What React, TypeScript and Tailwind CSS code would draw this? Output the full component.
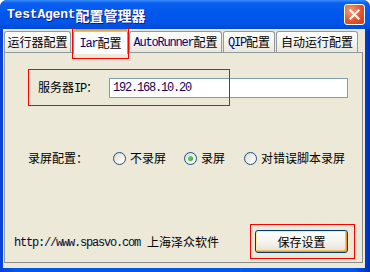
import React from "react";

const cjk = "font-['Noto_Sans_CJK_SC',sans-serif]";

function L({ children }: { children: React.ReactNode }) {
  // latin half-width glyphs, like SimSun
  return <span className="font-['Liberation_Mono',monospace] tracking-[-1.2px]">{children}</span>;
}

function Tab({ children, w, ml, active }: { children: React.ReactNode; w: string; ml: string; active?: boolean }) {
  if (active) {
    return (
      <div className={`relative z-10 ${ml} ${w} h-[25px] -mb-[1px] rounded-t-[3px] border border-b-0 border-[#919b9c] bg-[#fcfcfe] flex items-center justify-center pt-[2px]`}>
        <div className="absolute left-[-1px] right-[-1px] top-[-1px] h-[3px] rounded-t-[3px] bg-[linear-gradient(to_bottom,#e68b2c,#ffc73c)]" />
        {children}
        {/* annotation box */}
        <div className="absolute left-[-2px] right-[-2px] top-[-3px] bottom-[-5px] border border-[#ff0000]" />
      </div>
    );
  }
  return (
    <div className={`${ml} ${w} mt-[2px] h-[21px] rounded-t-[3px] border border-b-0 border-[#919b9c] bg-[linear-gradient(to_bottom,#ffffff,#f3f2ec_60%,#e9e7de)] flex items-center justify-center`}>
      {children}
    </div>
  );
}

function Radio({ label, checked, ml }: { label: string; checked?: boolean; ml?: string }) {
  return (
    <div className={`flex items-center gap-[4px] ${ml ?? ""}`}>
      <div className="w-[13px] h-[13px] rounded-full border border-[#1c5180] bg-[linear-gradient(135deg,#dcd9cf,#f4f3ee_60%,#ffffff)] flex items-center justify-center">
        {checked && <div className="w-[5px] h-[5px] rounded-full bg-[radial-gradient(circle_at_35%_35%,#6fd36f,#21a121)]" />}
      </div>
      <span>{label}</span>
    </div>
  );
}

export default function App() {
  return (
    <div className={`w-[370px] h-[272px] flex flex-col bg-[linear-gradient(to_right,#0841d6,#0058ee_5%,#0058ee_95%,#0030b8)] rounded-t-[7px] ${cjk} text-[12px] text-black`}>
      {/* TITLE BAR */}
      <div className="h-[29px] shrink-0 rounded-t-[7px] bg-[linear-gradient(to_bottom,#3b8cfb_0%,#0a5ff0_10%,#0057ec_45%,#0055e8_80%,#0049d4_100%)] flex items-center pl-[7px] pr-[5px]">
        <div className="text-white font-bold text-[14px] leading-none flex items-center [text-shadow:1px_1px_0_#0f1b8c]">
          <span className="font-['Liberation_Mono',monospace] text-[13px] tracking-[-0.2px]">TestAgent</span>
          <span>配置管理器</span>
        </div>
        <div className="ml-auto w-[21px] h-[21px] rounded-[3px] border border-white bg-[radial-gradient(circle_at_30%_30%,#f49a7e,#e2552c_55%,#c1401c)] flex items-center justify-center">
          <svg width="11" height="11" viewBox="0 0 11 11">
            <path d="M1.5 1.5 L9.5 9.5 M9.5 1.5 L1.5 9.5" stroke="white" strokeWidth="2.2" strokeLinecap="square" />
          </svg>
        </div>
      </div>

      {/* BODY */}
      <div className="flex-1 ml-[3px] mr-[5px] mb-[4px] bg-[#ece9d8] flex flex-col">
        {/* TABS */}
        <div className="flex items-start h-[23px] pl-[1px]">
          <Tab w="w-[67px]" ml="ml-0">运行器配置</Tab>
          <Tab w="w-[55px]" ml="ml-[2px]" active>
            <span className="text-[#000080]"><L>Iar</L></span>配置
          </Tab>
          <Tab w="w-[93px]" ml="ml-[1px]">
            <span className="text-[#000080]"><L>AutoRunner</L></span>配置
          </Tab>
          <Tab w="w-[52px]" ml="ml-[1px]">
            <span className="text-[#000080]"><L>QIP</L></span>配置
          </Tab>
          <Tab w="w-[82px]" ml="ml-[1px]">自动运行配置</Tab>
        </div>

        {/* PANEL */}
        <div className="flex-1 ml-[1px] mr-[2px] mb-[5px] border border-[#919b9c] border-r-[#8c8c8c] border-b-[#8c8c8c] bg-[#ece9d8] flex flex-col">
          {/* IP ROW */}
          <div className="relative mt-[16px] h-[37px] flex items-center pl-[33px]">
            <span className="w-[71px] shrink-0">服务器<L>IP</L>：</span>
            <div className="w-[239px] h-[20px] border border-[#7f9db9] bg-white flex items-center pl-[3px] text-[#1a0050]">
              <L>192.168.10.20</L>
            </div>
            <div className="absolute left-[23px] top-0 w-[202px] h-[37px] border border-[#ff0000]" />
          </div>

          {/* RECORD ROW */}
          <div className="mt-[43px] h-[18px] flex items-center pl-[23px]">
            <span className="w-[85px] shrink-0">录屏配置：</span>
            <Radio label="不录屏" />
            <Radio label="录屏" checked ml="ml-[18px]" />
            <Radio label="对错误脚本录屏" ml="ml-[19px]" />
          </div>

          {/* FOOTER */}
          <div className="mt-auto mb-[3px] flex items-center pl-[9px] pr-[7px]">
            <span className="text-[#0a0a30]"><L>http://www.spasvo.com</L></span>
            <span className="ml-[7px]">上海泽众软件</span>
            <div className="ml-auto border border-[#ff0000] pl-[4px] pr-[6px] py-[5px]">
              <button className="w-[93px] h-[23px] rounded-[3px] border border-[#003c74] bg-[linear-gradient(to_bottom,#ffffff,#f5f4ef_50%,#e3e0d6)] shadow-[inset_1px_1px_0_#fde9a8,inset_-1px_-1px_0_#e5972c,inset_-2px_-2px_0_#f8c05a] flex items-center justify-center text-[12px]">
                保存设置
              </button>
            </div>
          </div>
        </div>
      </div>
    </div>
  );
}
